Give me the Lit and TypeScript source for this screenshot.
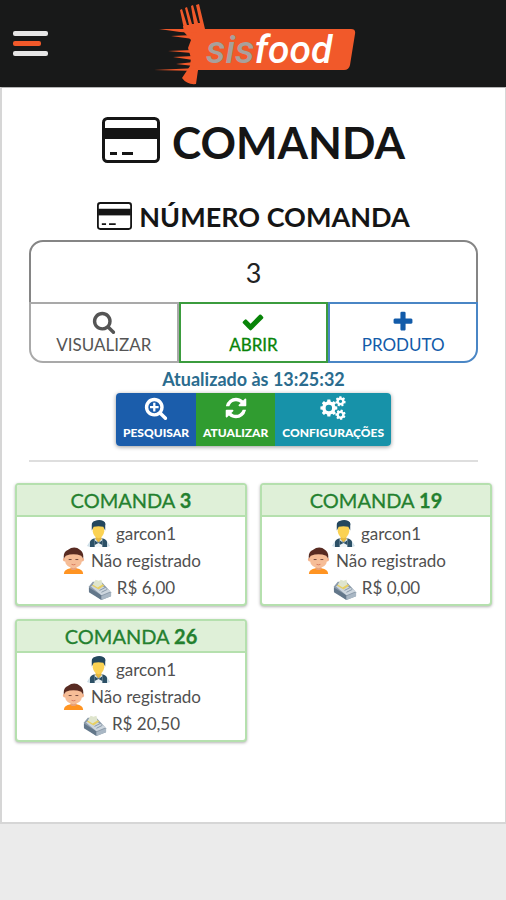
import { LitElement, html, css, svg } from "lit";
import { customElement, property, state } from "lit/decorators.js";

const ICONS: Record<string, string> = {
  search:
    "M1216 832q0-185-131.5-316.5t-316.5-131.5-316.5 131.5-131.5 316.5 131.5 316.5 316.5 131.5 316.5-131.5 131.5-316.5zm512 832q0 52-38 90t-90 38q-54 0-90-38l-343-342q-179 124-399 124-143 0-273.5-55.5t-225-150-150-225-55.5-273.5 55.5-273.5 150-225 225-150 273.5-55.5 273.5 55.5 225 150 150 225 55.5 273.5q0 220-124 399l343 343q37 37 37 90z",
  check:
    "M1671 566q0 40-28 68l-724 724-136 136q-28 28-68 28t-68-28l-136-136-362-362q-28-28-28-68t28-68l136-136q28-28 68-28t68 28l294 295 656-657q28-28 68-28t68 28l136 136q28 28 28 68z",
  plus:
    "M1600 736v192q0 40-28 68t-68 28h-416v416q0 40-28 68t-68 28h-192q-40 0-68-28t-28-68v-416h-416q-40 0-68-28t-28-68v-192q0-40 28-68t68-28h416v-416q0-40 28-68t68-28h192q40 0 68 28t28 68v416h416q40 0 68 28t28 68z",
  refresh:
    "M1639 1056q0 5-1 7-64 268-268 434.5t-478 166.5q-146 0-282.5-55t-243.5-157l-129 129q-19 19-45 19t-45-19-19-45v-448q0-26 19-45t45-19h448q26 0 45 19t19 45-19 45l-137 137q71 66 161 102t187 36q134 0 250-65t186-179q11-17 53-117 8-23 30-23h192q13 0 22.5 9.5t9.5 22.5zm25-800v448q0 26-19 45t-45 19h-448q-26 0-45-19t-19-45 19-45l138-138q-148-137-349-137-134 0-250 65t-186 179q-11 17-53 117-8 23-30 23h-199q-13 0-22.5-9.5t-9.5-22.5v-7q65-268 270-434.5t480-166.5q146 0 284 55.5t245 156.5l130-129q19-19 45-19t45 19 19 45z",
};

/** Outline of a toothed wheel with a round hole. */
function gear(cx: number, cy: number, outer: number, inner: number, hole: number, teeth: number, turn = 0): string {
  const pts: string[] = [];
  const step = (Math.PI * 2) / teeth;
  for (let i = 0; i < teeth; i++) {
    const a = turn + i * step;
    for (const [r, o] of [[inner, -0.34], [outer, -0.22], [outer, 0.22], [inner, 0.34]]) {
      pts.push(`${(cx + r * Math.cos(a + o * step)).toFixed(1)} ${(cy + r * Math.sin(a + o * step)).toFixed(1)}`);
    }
  }
  return `M${pts.join("L")}zM${cx - hole} ${cy}a${hole} ${hole} 0 1 0 ${hole * 2} 0a${hole} ${hole} 0 1 0 ${-hole * 2} 0z`;
}

const COGS =
  gear(650, 900, 640, 500, 240, 8, 0) +
  gear(1520, 400, 390, 300, 125, 7, 0.2) +
  gear(1520, 1400, 390, 300, 125, 7, 0.5);

function icon(name: string) {
  if (name === "cogs") {
    return svg`<svg class="ico wide" viewBox="0 0 1920 1792" aria-hidden="true"><path fill="currentColor" fill-rule="evenodd" d=${COGS} /></svg>`;
  }
  if (name === "zoom") {
    return svg`<svg class="ico" viewBox="0 0 1792 1792" aria-hidden="true"><path fill="currentColor" d=${ICONS.search} /><path stroke="currentColor" stroke-width="170" d="M768 510v644M446 832h644" /></svg>`;
  }
  return svg`<svg class="ico" viewBox="0 0 1792 1792" aria-hidden="true"><path fill="currentColor" d=${ICONS[name]} /></svg>`;
}

const creditCard = (cls: string) => html`<svg class=${cls} viewBox="0 0 58 46" aria-hidden="true">
  <rect x="1.5" y="1.5" width="55" height="43" rx="4" fill="none" stroke="#151515" stroke-width="3" />
  <rect x="2" y="11" width="54" height="11" fill="#151515" />
  <path d="M8 36.500h7M20 36.500h11" stroke="#151515" stroke-width="3" />
</svg>`;

const waiter = html`<svg class="pic" viewBox="0 0 26 28" aria-hidden="true">
  <path d="M4 28v-4q0-4 5-5h8q5 1 5 5v4z" fill="#2c5066" />
  <path d="M9 18l4 6 4-6v10H9z" fill="#eef4f7" />
  <path d="M9 21l4 3 4-3v5l-4-2-4 2z" fill="#2c5066" />
  <path d="M1 27l3-5v6zM25 27l-3-5v6z" fill="#cfdfe8" />
  <path d="M10 15h6v5l-3 3-3-3z" fill="#e8b93f" />
  <path d="M7 6q6-3 12 0v6q-1 6-6 7-5-1-6-7z" fill="#fbd253" />
  <path d="M6 11V5q0-3 3-4 5-2 9 0 3 1 2 5v5l-2-4q-5-1-10 0z" fill="#24475d" />
</svg>`;

const client = html`<svg class="pic" viewBox="0 0 26 28" aria-hidden="true">
  <path d="M3 28q0-5 7-6h6q7 1 7 6-10 1-20 0z" fill="#ff9422" />
  <path d="M10 19h6v4q-3 2-6 0z" fill="#e8a078" />
  <circle cx="4" cy="13" r="2" fill="#f2b38d" /><circle cx="22" cy="13" r="2" fill="#f2b38d" />
  <path d="M4 8q9-5 18 0v6q-1 7-9 8-8-1-9-8z" fill="#f6bd97" />
  <path d="M3 12Q2 5 7 3q7-5 13 0 4 3 3 9l-2-3q-8-3-16 0z" fill="#582b22" />
  <path d="M8 13h3M15 13h3" stroke="#70483c" stroke-width="1" />
  <path d="M11 18q2 1 4 0" fill="none" stroke="#d77a60" stroke-width="1" />
</svg>`;

const register = html`<svg class="pic" viewBox="0 0 26 28" aria-hidden="true">
  <path d="M2 13l4-5 9 0 10 11v4l-10 4L2 17z" fill="#8d9cab" />
  <path d="M2 14l13 8v5L2 19z" fill="#63778a" />
  <path d="M15 23l10-4v4l-10 4z" fill="#a9b7c4" />
  <path d="M4 13l6-4 15 9-10 4z" fill="#cdd6de" />
  <path d="M5 12l7-4 6 4-6 4z" fill="#e7cf62" />
  <path d="M6 11l3-5 3 1 3-1 1 5-5 3z" fill="#dfe5cd" />
  <path d="M13 17l6-3M15 19l6-3" stroke="#8798a8" stroke-width="1" />
</svg>`;

@customElement("order-card")
export class OrderCard extends LitElement {
  @property() number = "";
  @property() waiter = "";
  @property() client = "";
  @property() total = "";

  static styles = css`
    :host { display: block; }
    .card {
      box-sizing: border-box;
      border: 2px solid #b5e0ae;
      border-radius: 4px;
      background: #fff;
      box-shadow: 0 1px 3px rgba(0, 0, 0, 0.3);
      padding-bottom: 3px;
      overflow: hidden;
    }
    .head {
      margin: 0 0 3px;
      background: #dff0d8;
      border-bottom: 2px solid #b5e0ae;
      color: #24802f;
      font-size: 20px;
      line-height: 30px;
      font-weight: 400;
      text-align: center;
      -webkit-text-stroke: 0.3px currentColor;
    }
    .line {
      display: flex;
      align-items: center;
      justify-content: center;
      gap: 5px;
      height: 27px;
      color: #505050;
      font-size: 17px;
      line-height: 27px;
    }
    .pic { width: 25px; height: 27px; flex: none; }
  `;

  render() {
    return html`<article class="card">
      <h3 class="head">COMANDA <b>${this.number}</b></h3>
      <div class="line">${waiter}<span>${this.waiter}</span></div>
      <div class="line">${client}<span>${this.client}</span></div>
      <div class="line">${register}<span>${this.total}</span></div>
    </article>`;
  }
}

@customElement("app-root")
export class AppRoot extends LitElement {
  @state() private current = "3";

  private orders = [
    { number: "3", total: "R$ 6,00" },
    { number: "19", total: "R$ 0,00" },
    { number: "26", total: "R$ 20,50" },
  ];

  static styles = css`
    :host {
      display: block;
      min-height: 100vh;
      background: #ebebeb;
      font-family: Lato, "Open Sans", sans-serif;
      color: #151515;
    }
    .top {
      display: grid;
      grid-template-columns: 1fr auto 1fr;
      align-items: center;
      height: 87px;
      background: #181919;
    }
    .menu {
      display: flex;
      flex-direction: column;
      gap: 5px;
      width: 36px;
      margin-left: 13px;
      padding: 0;
      border: 0;
      background: none;
      cursor: pointer;
    }
    .bar { width: 35px; height: 5px; border-radius: 2px; background: #e6e6e6; }
    .bar.short { width: 28px; background: #f1592a; }
    .logo { display: block; width: 206px; height: 87px; }
    .word { font-family: Roboto, sans-serif; font-style: italic; font-size: 39px; font-weight: 500; }
    .page {
      box-sizing: border-box;
      border: 2px solid #d6d6d6;
      border-top-color: #b5b5b5;
      border-top-width: 1px;
      border-right-width: 1px;
      background: #fff;
      padding: 28px 13px 80px;
    }
    .block { margin: 0 14px; text-align: center; }
    .title, .label {
      display: flex;
      align-items: center;
      justify-content: center;
      margin: 0;
      font-weight: 700;
    }
    .title { gap: 12px; font-size: 44px; line-height: 52px; }
    .label { gap: 7px; margin-top: 33px; font-size: 27px; line-height: 32px; }
    .big { width: 58px; height: 48px; margin-bottom: 4px; }
    .small { width: 35px; height: 28px; margin-bottom: 2px; }
    .number {
      display: block;
      box-sizing: border-box;
      width: 100%;
      height: 64px;
      margin-top: 7px;
      border: 2px solid #858585;
      border-radius: 14px 14px 0 0;
      background: #fff;
      color: #222;
      font: 400 27px/32px Lato, sans-serif;
      text-align: center;
      outline: 0;
    }
    .actions { display: grid; grid-template-columns: repeat(3, 1fr); margin-top: -2px; }
    .act, .tool {
      display: flex;
      flex-direction: column;
      align-items: center;
      background: none;
      font-family: inherit;
      cursor: pointer;
    }
    .act {
      padding: 6px 0 5px;
      border: 2px solid #a9a9a9;
      color: #555;
      font-size: 17px;
      line-height: 22px;
    }
    .act.view { border-radius: 0 0 0 14px; }
    .act.open { border-color: #3b9c3e; color: #088408; -webkit-text-stroke: 0.3px currentColor; }
    .act.add { border-color: #4a86c5; border-radius: 0 0 14px 0; color: #125ba9; }
    .ico { width: 24px; height: 24px; }
    .wide { width: 28px; }
    .stamp {
      margin: 5px 0 3px;
      color: #2b6c8e;
      font-size: 18px;
      line-height: 22px;
      font-weight: 700;
    }
    .tools {
      display: inline-flex;
      border-radius: 4px;
      overflow: hidden;
      box-shadow: 0 1px 4px rgba(0, 0, 0, 0.4);
      vertical-align: top;
    }
    .tool {
      padding: 3px 7px 4px;
      border: 0;
      color: #fff;
      font-size: 12px;
      line-height: 18px;
      font-weight: 900;
      gap: 4px;
    }
    .blue { background: #1b5dab; }
    .green { background: #309c30; }
    .teal { background: #1792a9; }
    .rule { height: 2px; margin: 14px 0 21px; border: 0; background: #dedede; }
    .orders { display: grid; grid-template-columns: 1fr 1fr; gap: 13px; margin: 0; }
  `;

  private logo() {
    return html`<svg class="logo" viewBox="0 0 206 87" role="img" aria-label="sisfood">
      <g fill="#f1592a">
        <path d="M51 29H201q5 0 4 5L200 65q-1 5-6 5H48L46 84q-9 1-14-6l8-12 1-8-3-10 3-8-7-8-1-6h14z" />
        <path d="M34 29L30 10l2-1 5 16 2 0-4-17 2-1 5 17 2 0-3-18 2-1 5 18 2 0-4-18 3-1 6 25z" />
        <path d="M9 29l38 0v4L30 32zM21 36l22-1v4zM18 51l24-1v3zM23 57l20-1v4zM26 64l18-2v4zM4 70l44-2v3z" />
      </g>
      <text class="word" x="56" y="63" fill="#a8a09c">sis<tspan fill="#fff">food</tspan></text>
    </svg>`;
  }

  render() {
    return html`
      <header class="top">
        <button class="menu" aria-label="Menu">
          <span class="bar"></span><span class="bar short"></span><span class="bar"></span>
        </button>
        ${this.logo()}
      </header>
      <main class="page">
        <section class="block">
          <h1 class="title">${creditCard("big")}<span>COMANDA</span></h1>
          <label class="label" for="number">${creditCard("small")}<span>NÚMERO COMANDA</span></label>
          <input
            class="number"
            id="number"
            inputmode="numeric"
            .value=${this.current}
            @input=${(e: Event) => (this.current = (e.target as HTMLInputElement).value)}
          />
          <div class="actions">
            <button class="act view">${icon("search")}VISUALIZAR</button>
            <button class="act open">${icon("check")}ABRIR</button>
            <button class="act add">${icon("plus")}PRODUTO</button>
          </div>
          <p class="stamp">Atualizado às 13:25:32</p>
          <div class="tools">
            <button class="tool blue">${icon("zoom")}PESQUISAR</button>
            <button class="tool green">${icon("refresh")}ATUALIZAR</button>
            <button class="tool teal">${icon("cogs")}CONFIGURAÇÕES</button>
          </div>
          <hr class="rule" />
        </section>
        <section class="orders">
          ${this.orders.map(
            (o) => html`<order-card number=${o.number} waiter="garcon1" client="Não registrado" total=${o.total}></order-card>`
          )}
        </section>
      </main>
    `;
  }
}
